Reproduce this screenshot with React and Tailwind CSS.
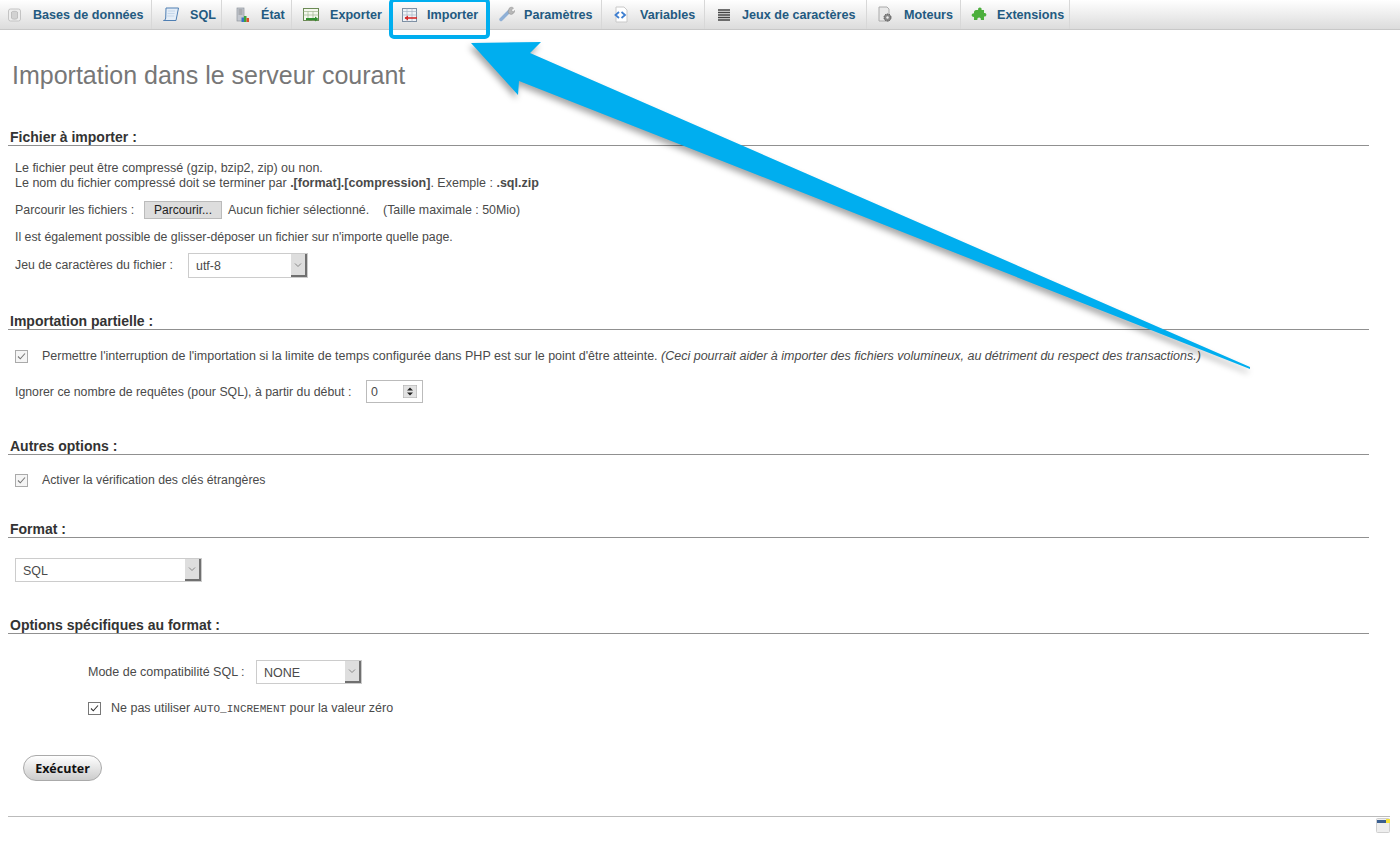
import React from "react";

const Db = () => (
  <svg width="16" height="16" viewBox="0 0 16 16">
    <rect x="1.5" y="2" width="12" height="12" rx="2" fill="#eee" stroke="#c4c4c4" />
    <ellipse cx="7.5" cy="5" rx="3" ry="1.2" fill="#c4c4c4" />
    <path d="M4.5 5v6c0 .7 1.3 1.2 3 1.2s3-.5 3-1.2V5" fill="#d2d2d2" stroke="#a8a8a8" strokeWidth=".6" />
  </svg>
);
const Sql = () => (
  <svg width="18" height="16" viewBox="0 0 18 16">
    <path d="M4 1h12.5l-2.5 12.5H1.5c1.5 0 2-1 2.2-2.5z" fill="#e4edf7" stroke="#4f7fb3" strokeWidth="1" />
    <path d="M6 4h7M5.6 6.5h7M5.2 9h7" stroke="#bcd0e6" strokeWidth=".8" />
  </svg>
);
const Etat = () => (
  <svg width="16" height="16" viewBox="0 0 16 16">
    <rect x="3" y="1" width="7" height="13" fill="#c4c8cf" stroke="#8f949c" strokeWidth=".7" />
    <path d="M4.5 3h4M4.5 5h4M4.5 7h4" stroke="#777" strokeWidth=".7" />
    <rect x="10" y="9" width="2.5" height="6" fill="#3aa53a" />
    <rect x="12.5" y="11" width="2.5" height="4" fill="#d94f2b" />
    <rect x="7.5" y="10.5" width="2.5" height="4.5" fill="#3b73c4" />
  </svg>
);
const Exp = () => (
  <svg width="16" height="16" viewBox="0 0 16 16">
    <rect x=".5" y="1.5" width="15" height="12" fill="#f5f8ee" stroke="#6b8a55" />
    <path d="M.5 4.5h15M5 4.5v9M10 4.5v9M.5 8h15" stroke="#9db58d" strokeWidth=".7" />
    <path d="M3 12h10" stroke="#2f8f2f" strokeWidth="2" />
    <path d="M12 9.5l3.5 2.5-3.5 2.5z" fill="#2f8f2f" />
  </svg>
);
const Imp = () => (
  <svg width="16" height="16" viewBox="0 0 16 16">
    <rect x=".5" y="1.5" width="14" height="13" fill="#eef2f6" stroke="#7d8fa3" />
    <path d="M.5 4.5h14M5 1.5v13M10 1.5v13M.5 8h14" stroke="#a7b5c4" strokeWidth=".7" />
    <path d="M3 11h12" stroke="#d62a2a" strokeWidth="1.6" />
    <path d="M6 8.5L2.5 11 6 13.5z" fill="#d62a2a" />
  </svg>
);
const Wrench = () => (
  <svg width="16" height="17" viewBox="0 0 16 17">
    <path d="M2 13.5L10 5.5" stroke="#8fb0d6" strokeWidth="3.4" strokeLinecap="round" />
    <path d="M10 2.5a3 3 0 0 1 4.5-.5l-2 2 .5 1.5 1.5.5 1-1.5a3.5 3.5 0 0 1-5 3.5L9 6z" fill="#b8b8b8" stroke="#8a8a8a" strokeWidth=".5" />
  </svg>
);
const Vars = () => (
  <svg width="16" height="17" viewBox="0 0 16 17">
    <path d="M3 1h8l3 3v12H3z" fill="#fff" stroke="#c9c9c9" />
    <path d="M6 6L2.5 9 6 12" fill="none" stroke="#3f7fd0" strokeWidth="1.8" />
    <path d="M8.5 6L12 9l-3.500 3" fill="none" stroke="#3f7fd0" strokeWidth="1.8" />
  </svg>
);
const Lines = () => (
  <svg width="14" height="14" viewBox="0 0 14 14">
    <path d="M1 2h12M1 4.500h12M1 7h12M1 9.500h12M1 12h12" stroke="#444" strokeWidth="1.5" />
  </svg>
);
const Engine = () => (
  <svg width="16" height="17" viewBox="0 0 16 17">
    <path d="M2 1h8l2 2v12H2z" fill="#e9e9e9" stroke="#aaa" />
    <circle cx="10.500" cy="11.500" r="3.500" fill="#888" stroke="#555" strokeWidth="1" strokeDasharray="1.400 .8" />
    <circle cx="10.500" cy="11.500" r="1.200" fill="#eee" />
  </svg>
);
const Puzzle = () => (
  <svg width="16" height="16" viewBox="0 0 16 16">
    <path d="M5 3h2.200a1.800 1.800 0 1 1 3.300 0H13v3a1.800 1.800 0 1 1 0 3.400V13H9.800a1.800 1.800 0 1 0-3.400 0H3V9.800a1.800 1.800 0 1 1 0-3.400V5c0-1 1-2 2-2z" fill="#4caf3c" />
  </svg>
);

const tabs = [
  ["Bases de données", <Db />, "w-[152px]", "pl-[7px]", "w-[26px]"],
  ["SQL", <Sql />, "w-[70px]", "pl-[10px]", "w-[28px]"],
  ["État", <Etat />, "w-[70px]", "pl-[12px]", "w-[27px]"],
  ["Exporter", <Exp />, "w-[99px]", "pl-[11px]", "w-[27px]"],
  ["Importer", <Imp />, "w-[99px]", "pl-[11px]", "w-[25px]"],
  ["Paramètres", <Wrench />, "w-[112px]", "pl-[9px]", "w-[25px]"],
  ["Variables", <Vars />, "w-[103px]", "pl-[11px]", "w-[27px]"],
  ["Jeux de caractères", <Lines />, "w-[162px]", "pl-[12px]", "w-[25px]"],
  ["Moteurs", <Engine />, "w-[94px]", "pl-[10px]", "w-[27px]"],
  ["Extensions", <Puzzle />, "w-[109px]", "pl-[10px]", "w-[26px]"],
];

const Heading = ({ children, className }) => (
  <h3 className={`h-[18px] border-b border-[#909090] text-[14px] leading-[18px] font-bold text-[#333] pl-[2px] ${className}`}>
    {children}
  </h3>
);

const Box = ({ dark }) => (
  <span className={`flex items-center justify-center shrink-0 w-[13px] h-[13px] border ${dark ? "border-[#777] bg-white" : "border-[#aaa] bg-[#f5f5f5]"}`}>
    <svg width="9" height="9" viewBox="0 0 9 9">
      <path d="M1 4.500l2.300 2.300L8 1.500" fill="none" stroke={dark ? "#333" : "#777"} strokeWidth="1.100" />
    </svg>
  </span>
);

const Select = ({ value, className }) => (
  <div className={`flex items-stretch border border-[#ccc] bg-white ${className}`}>
    <span className="flex-1 pl-[7px] pt-[2px] flex items-center">{value}</span>
    <span className="w-[16px] flex items-center justify-center bg-[#dedede] border-r-2 border-b-2 border-[#707070]">
      <svg width="8" height="6" viewBox="0 0 8 6">
        <path d="M1 1.500l3 3 3-3" fill="none" stroke="#888" strokeWidth="1" />
      </svg>
    </span>
  </div>
);

export default function App() {
  return (
    <div className="relative h-[844px] overflow-hidden bg-white text-[12.4px] leading-[15px] text-[#4a4a4a] font-['Liberation_Sans',Arial,sans-serif]">
      <nav className="flex h-[30px] border-b border-[#c8c8c8] bg-gradient-to-b from-[#ffffff] to-[#dcdcdc]">
        {tabs.map(([label, icon, w, pl, iw]) => (
          <div key={label} className={`relative flex items-center shrink-0 h-full border-r border-[#d8d8d8] ${w} ${pl}`}>
            <span className={`flex items-center ${iw}`}>{icon}</span>
            <span className="font-bold text-[12.6px] pt-[1px] text-[#235a81] whitespace-nowrap">{label}</span>
            {label === "Importer" && (
              <span className="absolute left-[-2px] top-[-2px] w-[101px] h-[41px] border-4 border-[#00aeef] rounded-[5px]" />
            )}
          </div>
        ))}
      </nav>

      <main className="pl-[8px] w-[1369px]">
        <h2 className="mt-[31px] h-[30px] pl-[4px] text-[25px] leading-[28px] text-[#777]">
          Importation dans le serveur courant
        </h2>

        <Heading className="mt-[37px]">Fichier à importer :</Heading>
        <div className="pl-[7px]">
          <p className="mt-[14px] pt-[1px] h-[30px] text-[12.5px]">
            Le fichier peut être compressé (gzip, bzip2, zip) ou non.
            <br />
            Le nom du fichier compressé doit se terminer par <b>.[format].[compression]</b>. Exemple : <b>.sql.zip</b>
          </p>
          <div className="mt-[11px] flex items-center h-[18px]">
            <span className="w-[129px]">Parcourir les fichiers :</span>
            <button className="w-[78px] h-[18px] bg-[#dddddd] border border-[#bbb] text-[#222] text-[12px]">Parcourir...</button>
            <span className="ml-[6px] w-[155px]">Aucun fichier sélectionné.</span>
            <span>(Taille maximale : 50Mio)</span>
          </div>
          <p className="mt-[10px] pt-[1px] h-[15px] text-[12.3px]">Il est également possible de glisser-déposer un fichier sur n'importe quelle page.</p>
          <div className="mt-[9px] flex items-center">
            <span className="w-[173px] text-[12.3px]">Jeu de caractères du fichier :</span>
            <Select value="utf-8" className="w-[120px] h-[25px]" />
          </div>
        </div>

        <Heading className="mt-[34px]">Importation partielle :</Heading>
        <div className="pl-[7px]">
          <div className="mt-[18px] flex items-center gap-[14px] h-[16px] text-[12.5px]">
            <Box />
            <span className="pt-[1px]">
              Permettre l'interruption de l'importation si la limite de temps configurée dans PHP est sur le point d'être atteinte.{" "}
              <i>(Ceci pourrait aider à importer des fichiers volumineux, au détriment du respect des transactions.)</i>
            </span>
          </div>
          <div className="mt-[16px] flex items-center">
            <span className="w-[351px] pt-[2px] text-[12.3px]">Ignorer ce nombre de requêtes (pour SQL), à partir du début :</span>
            <div className="w-[57px] h-[23px] border border-[#bbb] flex items-center pl-[4px] pr-[5px] justify-between">
              <span className="pt-[1px]">0</span>
              <svg width="14" height="13" viewBox="0 0 14 13">
                <rect width="14" height="13" fill="#e2e2e2" stroke="#aaa" />
                <path d="M7 2.500l3 3H4zM7 10.500l3-3H4z" fill="#222" />
              </svg>
            </div>
          </div>
        </div>

        <Heading className="mt-[34px]">Autres options :</Heading>
        <div className="pl-[7px] mt-[17px] flex items-center gap-[14px] h-[16px]">
          <Box />
          <span className="pt-[1px] text-[12.3px]">Activer la vérification des clés étrangères</span>
        </div>

        <Heading className="mt-[32px]">Format :</Heading>
        <div className="pl-[7px] mt-[20px]">
          <Select value="SQL" className="w-[187px] h-[24px]" />
        </div>

        <Heading className="mt-[34px]">Options spécifiques au format :</Heading>
        <div className="pl-[80px] text-[12.5px]">
          <div className="mt-[26px] flex items-center">
            <span className="w-[168px] pt-[1px]">Mode de compatibilité SQL :</span>
            <Select value="NONE" className="w-[106px] h-[24px]" />
          </div>
          <div className="mt-[16px] flex items-center gap-[10px] h-[16px]">
            <Box dark />
            <span className="pt-[2px]">
              Ne pas utiliser <code className="font-['Liberation_Mono',monospace] text-[11px]">AUTO_INCREMENT</code> pour la valeur zéro
            </span>
          </div>
        </div>

        <button className="mt-[39px] ml-[15px] w-[79px] h-[26px] rounded-full border border-[#aaa] bg-gradient-to-b from-white to-[#cccccc] text-[12.5px] font-bold text-[#111] font-['Open_Sans',sans-serif] block">
          Exécuter
        </button>

        <hr className="mt-[35px] w-[1382px] border-t border-[#bbb]" />
        <div className="flex justify-end w-[1382px] mt-[1px]">
          <svg width="14" height="15" viewBox="0 0 14 15">
            <rect x=".5" y=".5" width="13" height="14" rx="1" fill="#eeeeee" stroke="#cfcfcf" />
            <rect x="1" y="2" width="9" height="3" fill="#3a5f90" />
            <rect x="10" y="1" width="4" height="4" fill="#f5e23a" />
          </svg>
        </div>
      </main>

      <svg
        className="absolute left-0 top-0 pointer-events-none drop-shadow-[-2px_4px_3px_rgba(0,0,0,0.35)]"
        width="1400"
        height="844"
        viewBox="0 0 1400 844"
      >
        <path d="M471 43L541 42L530 53L1250 367L1250 369L519 81L518 95z" fill="#00aeef" />
      </svg>
    </div>
  );
}
